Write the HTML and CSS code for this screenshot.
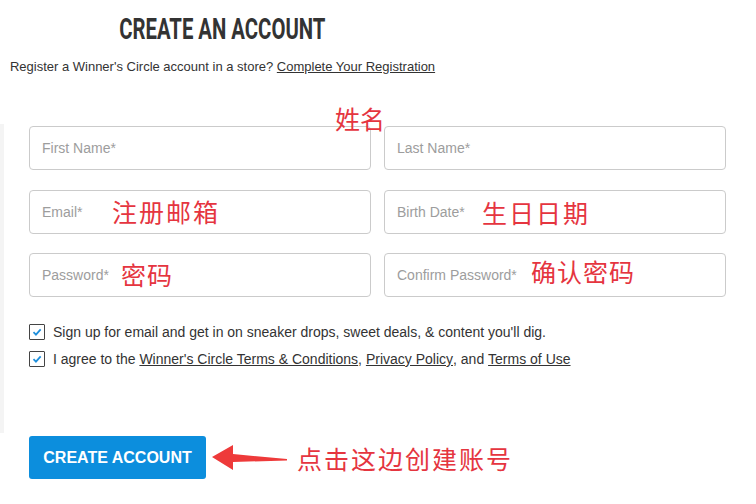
FILE: index.html
```html
<!DOCTYPE html>
<html lang="en">
<head>
<meta charset="utf-8">
<title>Create an Account</title>
<link rel="stylesheet" href="styles.css">
</head>
<body>
<header class="intro">
  <h1 class="title"><span>CREATE AN ACCOUNT</span></h1>
  <p class="sub">Register a Winner's Circle account in a store? <a href="#">Complete Your Registration</a></p>
</header>

<section class="form-area">
  <div class="grid">
    <div class="field"><input class="input" placeholder="First Name*"></div>
    <div class="field"><input class="input" placeholder="Last Name*"></div>
    <div class="field"><input class="input" placeholder="Email*"><span class="note note-email">注册邮箱</span></div>
    <div class="field"><input class="input" placeholder="Birth Date*"><span class="note note-birth">生日日期</span></div>
    <div class="field"><input class="input" placeholder="Password*"><span class="note note-pass">密码</span></div>
    <div class="field"><input class="input" placeholder="Confirm Password*"><span class="note note-confirm">确认密码</span></div>
  </div>
  <span class="note note-name">姓名</span>

  <div class="checks">
    <label class="check"><span class="box"><svg viewBox="0 0 16 16" width="16" height="16"><path d="M4 8.2 L6.8 11 L12.2 5" fill="none" stroke="#1e8fdc" stroke-width="2"/></svg></span>Sign up for email and get in on sneaker drops, sweet deals, &amp; content you'll dig.</label>
    <label class="check"><span class="box"><svg viewBox="0 0 16 16" width="16" height="16"><path d="M4 8.2 L6.8 11 L12.2 5" fill="none" stroke="#1e8fdc" stroke-width="2"/></svg></span>I agree to the&nbsp;<a href="#">Winner's Circle Terms &amp; Conditions</a>,&nbsp;<a href="#">Privacy Policy</a>, and&nbsp;<a href="#">Terms of Use</a></label>
  </div>
</section>

<div class="action">
  <button class="btn">CREATE ACCOUNT</button>
  <svg class="arrow" viewBox="0 0 80 30" width="80" height="30">
    <polygon points="2,14 23,2 23,11 77,16 77,17.5 23,19 23,27" fill="#ee3a3a"/>
  </svg>
  <span class="note-inline">点击这边创建账号</span>
</div>
</body>
</html>
```

FILE: styles.css
```css
* { box-sizing: border-box; }
html, body { margin: 0; padding: 0; background: #fff; }
body {
  font-family: "Liberation Sans", Arial, sans-serif;
  color: #333;
  width: 756px;
  height: 504px;
  overflow: hidden;
}
.intro {
  width: 445px;
  text-align: center;
  padding-top: 12px;
}
.title {
  margin: 0;
  font-family: Roboto, "Liberation Sans", sans-serif;
  font-weight: 700;
  font-size: 29px;
  line-height: 34px;
  color: #333;
}
.title span {
  display: inline-block;
  transform: scaleX(0.7);
}
.sub {
  margin: 13px 0 0;
  font-size: 13px;
  line-height: 15px;
  color: #333;
}
.sub a { color: #333; text-decoration: underline; }

.form-area {
  position: relative;
  margin-top: 50px;
  height: 309px;
  border-left: 4px solid #f4f4f4;
  padding: 2px 0 0 25px;
}
.grid {
  display: grid;
  grid-template-columns: 342px 342px;
  column-gap: 13px;
  row-gap: 19.5px;
}
.field { position: relative; }
.input {
  display: block;
  width: 100%;
  height: 44px;
  border: 1px solid #cbcbcb;
  border-radius: 4px;
  padding: 0 12px;
  font-family: "Liberation Sans", Arial, sans-serif;
  font-size: 14px;
  color: #333;
  background: #fff;
  outline: none;
}
.input::placeholder { color: #9d9d9d; }

.note, .note-inline {
  font-family: "Noto Sans CJK SC", sans-serif;
  color: #e5353f;
  font-size: 25px;
  line-height: 30px;
  white-space: nowrap;
}
.note { position: absolute; }
.note-name { left: 331px; top: -21px; letter-spacing: 0; }
.note-email { left: 83px; top: 6px; letter-spacing: 2px; }
.note-pass { left: 92px; top: 6px; letter-spacing: 1px; }
.note-birth { left: 98px; top: 7px; letter-spacing: 2px; }
.note-confirm { left: 147px; top: 3px; letter-spacing: 1px; }

.checks {
  margin-top: 27px;
  display: flex;
  flex-direction: column;
  gap: 11px;
}
.check {
  display: flex;
  align-items: center;
  font-size: 14px;
  line-height: 16px;
  color: #333;
}
.check a { color: #333; text-decoration: underline; }
.box {
  width: 16px;
  height: 16px;
  border: 1px solid #444;
  border-radius: 1px;
  margin-right: 8px;
  flex: none;
  display: flex;
}
.box svg { display: block; width: 14px; height: 14px; }

.action {
  display: flex;
  align-items: center;
  margin: 3px 0 0 29px;
}
.btn {
  width: 177px;
  height: 43px;
  background: #0c8edd;
  color: #fff;
  border: none;
  border-radius: 3px;
  font-family: "Liberation Sans", Arial, sans-serif;
  font-weight: 700;
  font-size: 16px;
  padding: 0;
}
.arrow { margin-left: 4px; display: block; }
.note-inline { margin-left: 7px; letter-spacing: 2px; font-size: 25px; }
```
